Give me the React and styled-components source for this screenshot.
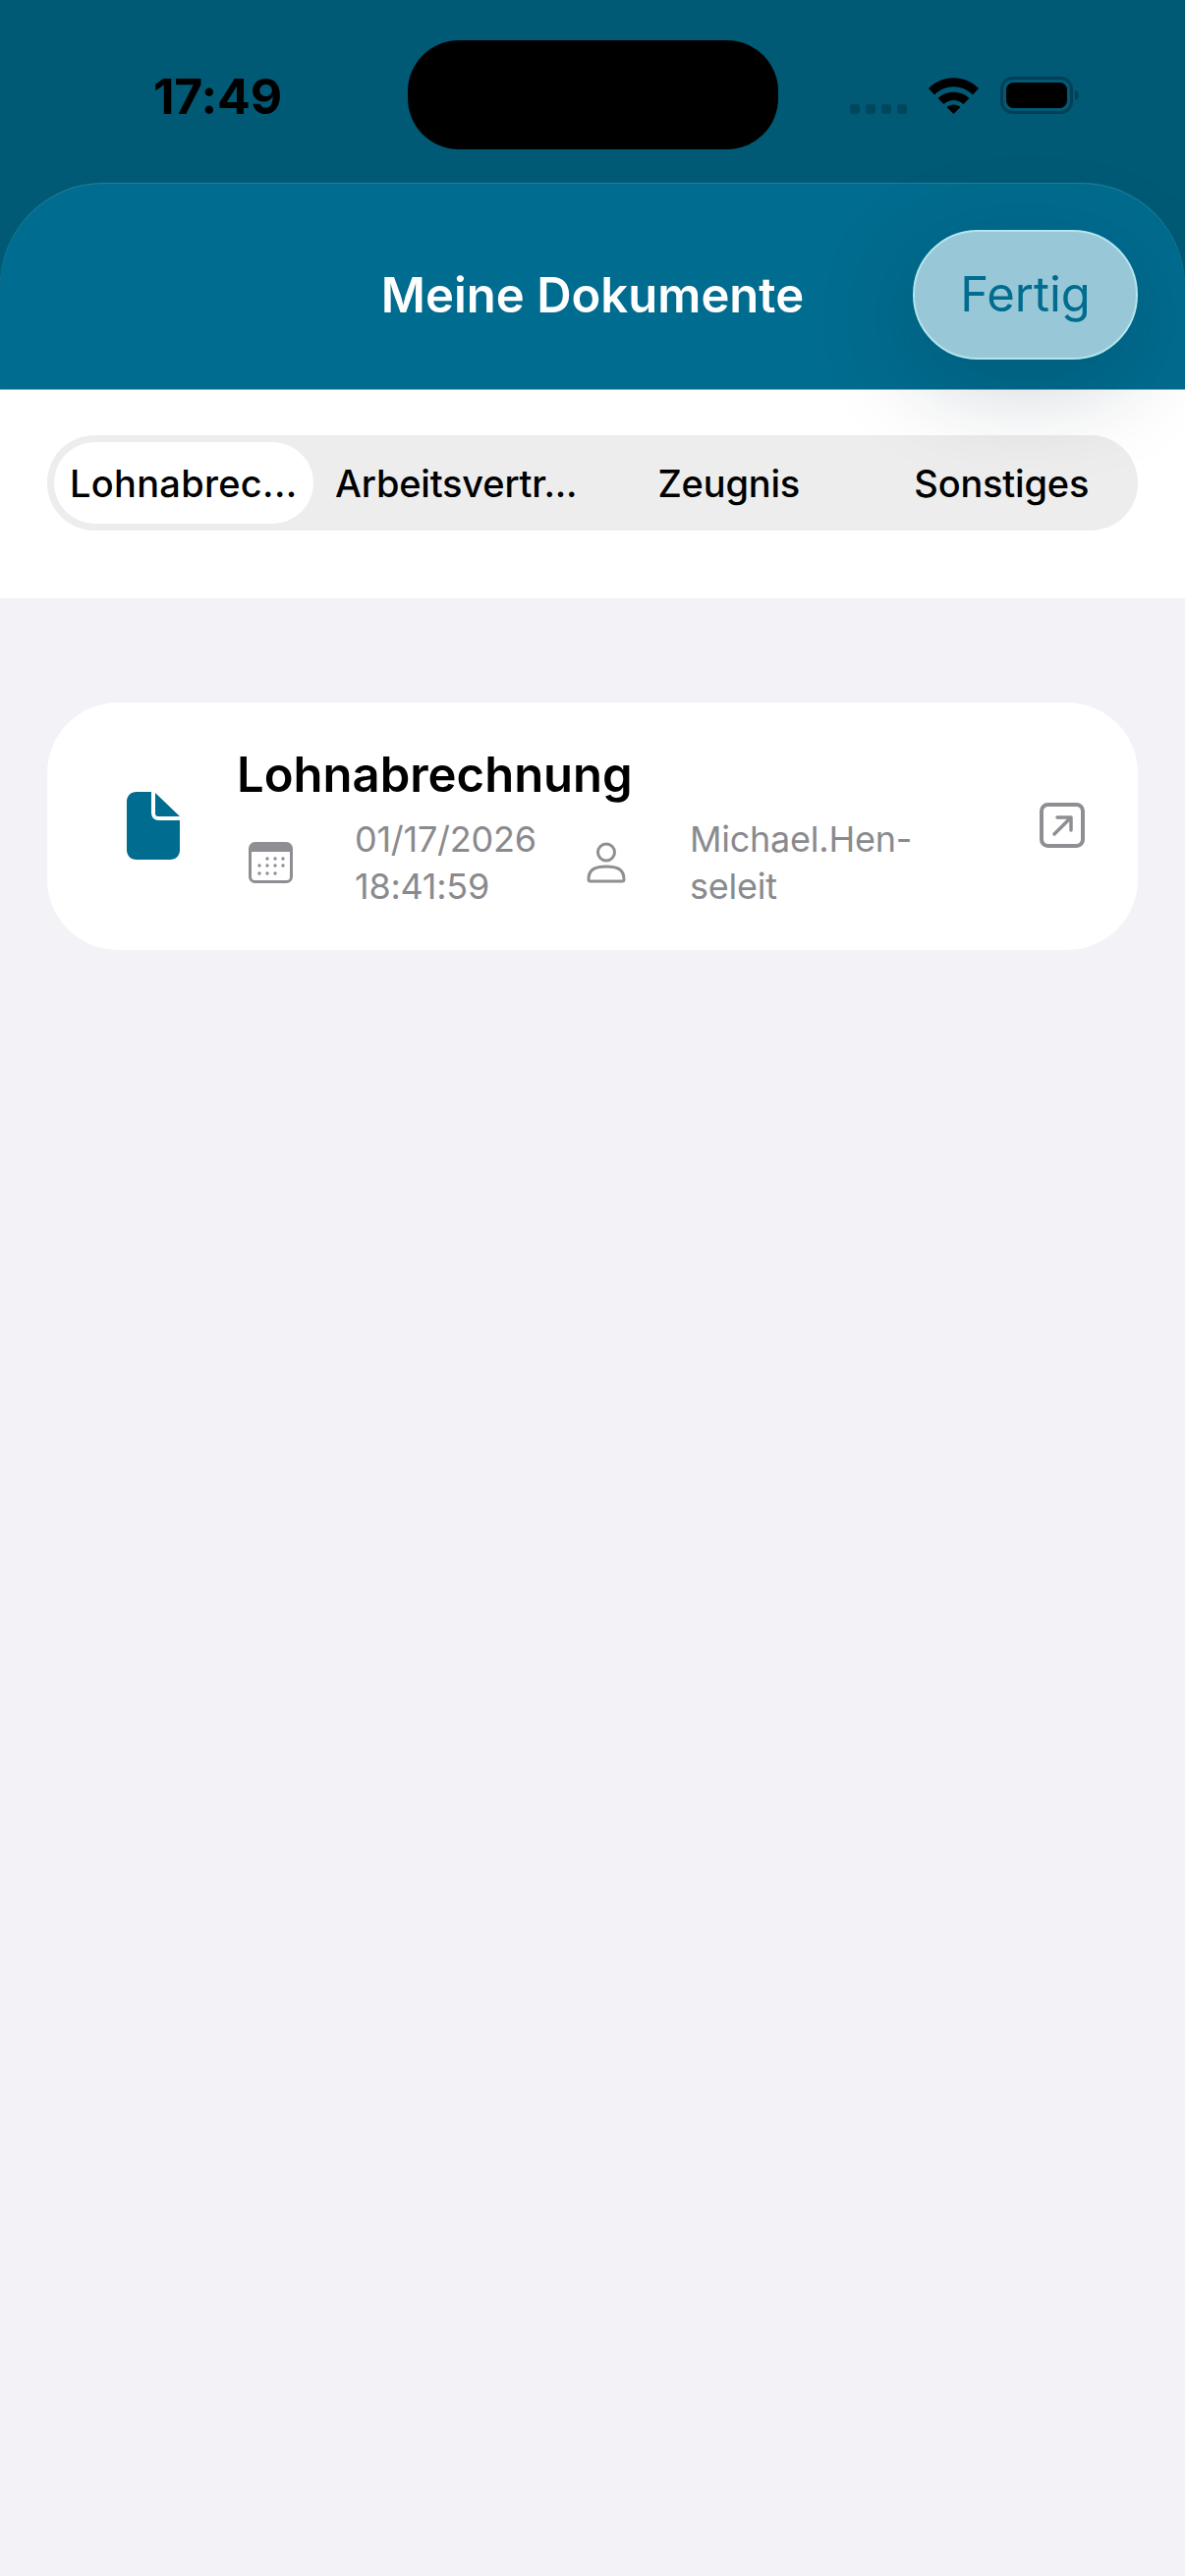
import React from "react";
import styled, { createGlobalStyle } from "styled-components";

const Global = createGlobalStyle`
  html, body { margin: 0; padding: 0; background: #f2f2f7; }
  body { font-family: Inter, "Liberation Sans", sans-serif; }
  * { box-sizing: border-box; }
`;
const Page = styled.div`
  width: 1206px; height: 2622px; display: flex; flex-direction: column;
  background: #f2f2f7; overflow: hidden;
`;
const Top = styled.div`background: #005a75; position: relative; z-index: 2;`;
const StatusBar = styled.div`
  height: 186px; display: grid; grid-template-columns: 1fr 377px 1fr; align-items: start;
  padding-top: 41px;
`;
const Time = styled.div`
  font-size: 50px; font-weight: 700; color: #000; line-height: 60px; margin: 27px 0 0 156px; letter-spacing: -0.2px;
`;
const Island = styled.div`height: 111px; border-radius: 52px; background: #000;`;
const StatusIcons = styled.div`display: flex; align-items: flex-end; margin: 37px 0 0 73px; height: 38px;`;
const Dots = styled.div`display: flex; gap: 6px; padding-bottom: 0;`;
const Dot = styled.span`width: 10px; height: 10px; border-radius: 3px; background: #00475e;`;
const Wifi = styled.svg`width: 51px; height: 37px; margin: 0 22px; display: block;`;
const Battery = styled.svg`width: 82px; height: 38px; display: block;`;
const Header = styled.header`
  height: 211px; background: #006c8f; border-radius: 105px 105px 0 0;
  box-shadow: inset 0 1px 1px rgba(255,255,255,.14); border-bottom: 1px solid #a9a9a9;
  display: grid; grid-template-columns: 1fr auto 1fr; align-items: center; position: relative;
  padding-top: 14px;
`;
const Title = styled.h1`
  grid-column: 2; margin: 0; color: #fff; font-size: 49px; font-weight: 600; line-height: 60px; padding-top: 6px;
`;
const Done = styled.button`
  grid-column: 3; justify-self: end; margin: 3px 48px 0 0; width: 229px; height: 132px; border-radius: 66px;
  background: #98c8d7; border: 2px solid #b3e5ee; color: #006c8f; font: 400 49px Inter, sans-serif;
  box-shadow: 0 24px 100px rgba(0, 30, 50, .22); padding: 0;
`;
const TabsSection = styled.div`background: #fff; height: 212px; padding: 46px 48px 0;`;
const Tabs = styled.div`
  height: 97px; border-radius: 48px; background: #ededed; display: grid; grid-template-columns: repeat(4, 1fr);
`;
const Tab = styled.div`
  display: flex; align-items: center; justify-content: center; white-space: nowrap; color: #000;
  font-size: 38px; font-weight: 500; letter-spacing: ${p => p.$active ? "0.3px" : "-0.2px"}; border-radius: 42px;
  margin: 7px; background: ${p => p.$active ? "#fff" : "transparent"};
`;
const List = styled.main`padding: 106px 48px 0;`;
const Card = styled.article`
  height: 252px; border-radius: 72px; background: #fff; display: flex; padding: 0 54px 0 81px;
  align-items: center;
`;
const FileIcon = styled.svg`width: 54px; height: 69px; flex: none; margin-top: -2px;`;
const Body = styled.div`flex: 1; margin-left: 58px; padding-top: 2px;`;
const CardTitle = styled.h2`margin: 0; font-size: 49px; font-weight: 600; line-height: 60px; color: #000;`;
const Meta = styled.div`display: flex; align-items: center; margin-top: 11px;`;
const MetaIcon = styled.svg`flex: none; display: block; margin-left: ${p => p.$gap}px;`;
const MetaText = styled.div`font-size: 36px; line-height: 48px; color: #8a8a8e; font-weight: 400; letter-spacing: -0.25px;`;
const DateBlock = styled(MetaText)`width: 178px; margin-left: 63px;`;
const NameBlock = styled(MetaText)`margin-left: 65px;`;
const OpenIcon = styled.svg`width: 46px; height: 46px; flex: none; margin-top: -2px;`;

const dots = [[19,17],[27,17],[35,17],[11,24],[19,24],[27,24],[35,24],[11,32],[19,32],[27,32]];

export default function App() {
  return (
    <Page>
      <Global />
      <Top>
        <StatusBar>
          <Time>17:49</Time>
          <Island />
          <StatusIcons>
            <Dots><Dot /><Dot /><Dot /><Dot /></Dots>
            <Wifi viewBox="0 0 51 37">
              <path d="M0 11 C14 -3.500 37 -3.500 51 11 L45 17.500 C34 6.500 17 6.500 6 17.500 Z" fill="#000" />
              <path d="M9.500 21 C18 12.500 33 12.500 41.500 21 L35.500 27 C29.500 21.500 21.500 21.500 15.500 27 Z" fill="#000" />
              <path d="M18.500 30 C22.500 26.500 28.500 26.500 32.500 30 L25.500 37 Z" fill="#000" />
            </Wifi>
            <Battery viewBox="0 0 82 38">
              <rect x="1.500" y="1.500" width="71" height="35" rx="11" fill="none" stroke="#003f57" strokeWidth="3" />
              <rect x="6" y="6" width="62" height="26" rx="7.500" fill="#000" />
              <path d="M76 14 C81 15.500 81 22.500 76 24 Z" fill="#003f57" />
            </Battery>
          </StatusIcons>
        </StatusBar>
        <Header>
          <Title>Meine Dokumente</Title>
          <Done>Fertig</Done>
        </Header>
      </Top>
      <TabsSection>
        <Tabs>
          <Tab $active>Lohnabrec...</Tab>
          <Tab>Arbeitsvertr...</Tab>
          <Tab>Zeugnis</Tab>
          <Tab>Sonstiges</Tab>
        </Tabs>
      </TabsSection>
      <List>
        <Card>
          <FileIcon viewBox="0 0 54 69">
            <path d="M10 0 H25 V21 C25 26 28 29 33 29 H54 V59 C54 65 50 69 44 69 H10 C4 69 0 65 0 59 V10 C0 4 4 0 10 0 Z" fill="#006c8f" />
            <path d="M29 1 L54 25 H32 C30 25 29 24 29 22 Z" fill="#006c8f" />
          </FileIcon>
          <Body>
            <CardTitle>Lohnabrechnung</CardTitle>
            <Meta>
              <MetaIcon $gap={12} width="45" height="42" viewBox="0 0 45 42">
                <rect x="1.500" y="1.500" width="42" height="39" rx="5" fill="#fff" stroke="#8e8e93" strokeWidth="3" />
                <path d="M1 10 V6 C1 3 3 1 6 1 H39 C42 1 44 3 44 6 V10 Z" fill="#8e8e93" />
                <g fill="#8e8e93">
                  {dots.map(([x, y]) => <circle key={x + "-" + y} cx={x} cy={y} r="1.700" />)}
                </g>
              </MetaIcon>
              <DateBlock>01/17/2026<br />18:41:59</DateBlock>
              <MetaIcon $gap={58} width="40" height="42" viewBox="0 0 40 42">
                <circle cx="20" cy="10.500" r="8.500" fill="none" stroke="#8e8e93" strokeWidth="3" />
                <path d="M2 38 C2 27 10 25 20 25 C30 25 38 27 38 38 C38 39.500 37 40 36 40 H4 C3 40 2 39.500 2 38 Z" fill="none" stroke="#8e8e93" strokeWidth="3" strokeLinejoin="round" />
              </MetaIcon>
              <NameBlock>Michael.Hen-<br />seleit</NameBlock>
            </Meta>
          </Body>
          <OpenIcon viewBox="0 0 46 46">
            <rect x="2" y="2" width="42" height="42" rx="6.500" fill="none" stroke="#8e8e93" strokeWidth="4" />
            <path d="M15 32 L31 16 M18 15 H32 V28" fill="none" stroke="#8e8e93" strokeWidth="3.500" strokeLinecap="round" strokeLinejoin="round" />
          </OpenIcon>
        </Card>
      </List>
    </Page>
  );
}
